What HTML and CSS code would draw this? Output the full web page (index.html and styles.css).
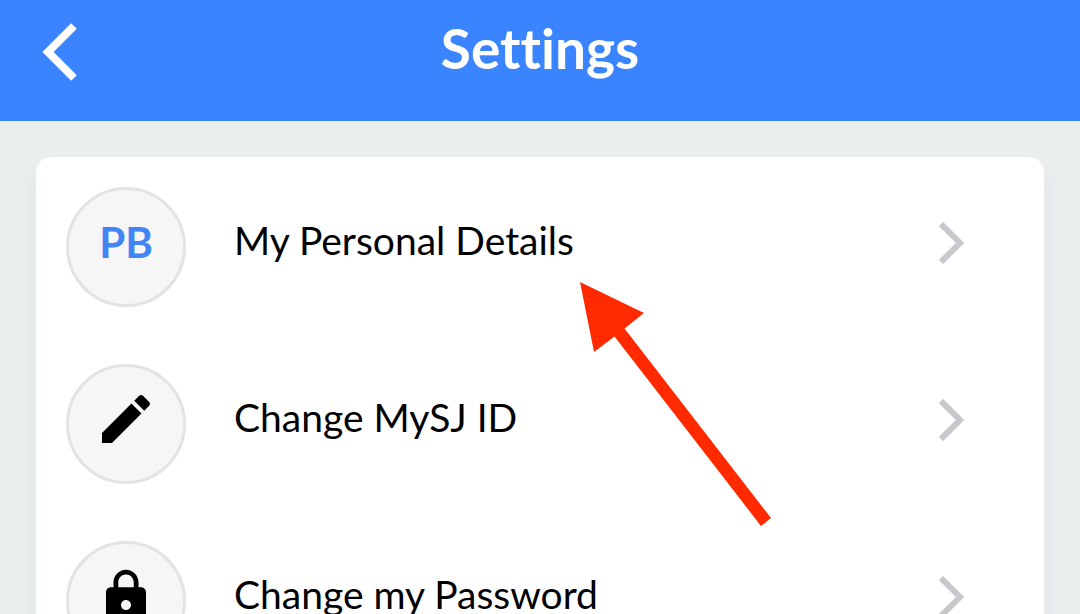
FILE: index.html
```html
<!DOCTYPE html>
<html lang="en">
<head>
<meta charset="utf-8">
<meta name="viewport" content="width=device-width, initial-scale=1">
<title>Settings</title>
<link rel="stylesheet" href="styles.css">
</head>
<body>
<header class="header">
  <button class="back" type="button" aria-label="Back">
    <svg class="back-icon" viewBox="0 0 36 58" aria-hidden="true"><path d="M32 3 6 29l26 26" fill="none" stroke="currentColor" stroke-width="8"/></svg>
  </button>
  <h1 class="title">Settings</h1>
</header>
<main class="content">
  <nav class="card" aria-label="Settings">
    <a class="row" href="#details">
      <span class="badge initials">PB</span>
      <span class="label">My Personal Details</span>
      <svg class="chevron" viewBox="0 0 26 42" aria-hidden="true"><path d="m2 2 19 19L2 40" fill="none" stroke="currentColor" stroke-width="6"/></svg>
    </a>
    <a class="row" href="#id">
      <span class="badge">
        <svg class="icon" viewBox="0 0 512 512" aria-hidden="true"><path d="M64 368v80h80l235.727-235.729-79.999-79.998L64 368zm377.602-217.602c8.531-8.531 8.531-21.334 0-29.865l-50.135-50.135c-8.531-8.531-21.334-8.531-29.865 0l-39.468 39.469 79.999 79.998 39.469-39.467z"/></svg>
      </span>
      <span class="label">Change MySJ ID</span>
      <svg class="chevron" viewBox="0 0 26 42" aria-hidden="true"><path d="m2 2 19 19L2 40" fill="none" stroke="currentColor" stroke-width="6"/></svg>
    </a>
    <a class="row" href="#password">
      <span class="badge">
        <svg class="icon" viewBox="0 0 512 512" aria-hidden="true"><path d="M376 186h-20v-40c0-55-45-100-100-100S156 91 156 146v40h-20c-22.002 0-40 17.998-40 40v200c0 22.002 17.998 40 40 40h240c22.002 0 40-17.998 40-40V226c0-22.002-17.998-40-40-40zM256 368c-22.002 0-40-17.998-40-40s17.998-40 40-40 40 17.998 40 40-17.998 40-40 40zm62.002-182H193.998v-40c0-34.004 28.003-62.002 62.002-62.002 34.004 0 62.002 27.998 62.002 62.002v40z"/></svg>
      </span>
      <span class="label">Change my Password</span>
      <svg class="chevron" viewBox="0 0 26 42" aria-hidden="true"><path d="m2 2 19 19L2 40" fill="none" stroke="currentColor" stroke-width="6"/></svg>
    </a>
    <svg class="pointer" viewBox="0 0 192 246" aria-hidden="true"><path d="M0 0 64 31 44.500 46.500 191 236 181 244 34.500 54.500 14 70z" fill="#ff2a00"/></svg>
  </nav>
</main>
</body>
</html>
```
FILE: styles.css
```css
* {
  box-sizing: border-box;
}

body {
  margin: 0;
  height: 100vh;
  overflow: hidden;
  background: #eaeeef;
  color: #000;
  font-family: Lato, "Open Sans", sans-serif;
  font-variant-ligatures: none;
}

.header {
  display: grid;
  grid-template-columns: 80px 1fr 80px;
  align-items: center;
  padding: 12px 0 37px;
  background: #3a84ff;
  color: #fff;
}

.back {
  display: flex;
  justify-content: flex-end;
  padding: 8px 2px 0 0;
  border: 0;
  background: none;
  color: inherit;
}

.back-icon {
  width: 36px;
  height: 58px;
}

.title {
  margin: 0;
  font-size: 55px;
  font-weight: 700;
  line-height: 72px;
  text-align: center;
}

.content {
  padding: 36px;
}

.card {
  position: relative;
  display: flex;
  flex-direction: column;
  gap: 57px;
  padding: 30px;
  border-radius: 15px;
  background: #fff;
  box-shadow: 0 12px 24px rgba(0, 0, 0, 0.04);
}

.row {
  display: flex;
  align-items: center;
  gap: 48px;
  padding-right: 49px;
  color: inherit;
  text-decoration: none;
}

.badge {
  display: flex;
  flex: none;
  align-items: center;
  justify-content: center;
  width: 120px;
  height: 120px;
  padding-bottom: 10px;
  border: 3px solid #e3e3e3;
  border-radius: 50%;
  background: #f6f6f6;
}

.initials {
  color: #4285f4;
  font-size: 42px;
  font-weight: 700;
}

.icon {
  width: 64px;
  height: 64px;
}

.label {
  flex: 1;
  padding-bottom: 14px;
  font-size: 39px;
  line-height: 52px;
}

.chevron {
  flex: none;
  width: 26px;
  height: 50px;
  padding-bottom: 8px;
  color: #c7c7cc;
}

.pointer {
  position: absolute;
  top: 125px;
  left: calc(50% + 40px);
  width: 192px;
  height: 246px;
  pointer-events: none;
}
```
